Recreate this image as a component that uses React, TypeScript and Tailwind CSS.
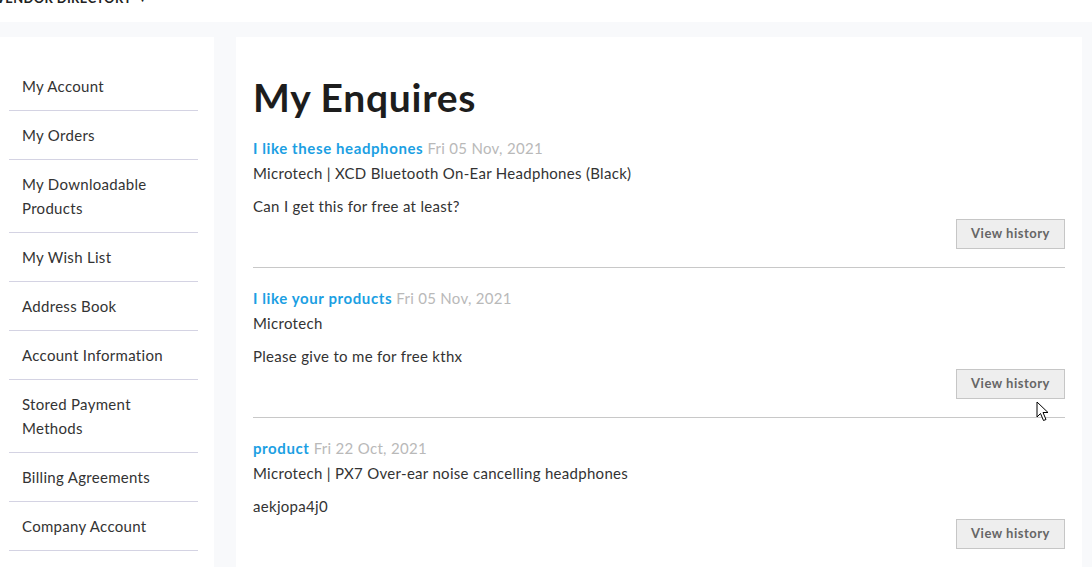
import React from 'react';

const navItems = [
  'My Account',
  'My Orders',
  'My Downloadable Products',
  'My Wish List',
  'Address Book',
  'Account Information',
  'Stored Payment Methods',
  'Billing Agreements',
  'Company Account',
];

const enquiries = [
  {
    title: 'I like these headphones',
    date: 'Fri 05 Nov, 2021',
    product: 'Microtech | XCD Bluetooth On-Ear Headphones (Black)',
    message: 'Can I get this for free at least?',
  },
  {
    title: 'I like your products',
    date: 'Fri 05 Nov, 2021',
    product: 'Microtech',
    message: 'Please give to me for free kthx',
  },
  {
    title: 'product',
    date: 'Fri 22 Oct, 2021',
    product: 'Microtech | PX7 Over-ear noise cancelling headphones',
    message: 'aekjopa4j0',
  },
];

export default function App() {
  return (
    <div
      className="relative h-[567px] overflow-hidden bg-[#f8f9fb] text-[#333] tracking-[0.3px]"
      style={{ fontFamily: 'Lato, "Open Sans", Arial, sans-serif' }}
    >
      {/* top bar */}
      <div className="h-[22px] bg-white overflow-hidden">
        <div className="-mt-[11px] flex items-center gap-2 text-[13px] font-bold tracking-wide text-[#222] uppercase">
          <span className="-ml-[4px]">Vendor Directory</span>
          <span className="text-[10px]">▾</span>
        </div>
      </div>

      <div className="flex gap-[22px] pt-[15px]">
        {/* sidebar */}
        <aside className="w-[214px] shrink-0 bg-white pt-[25px] pl-[9px] pr-[16px] h-[600px]">
          <ul>
            {navItems.map((item) => (
              <li
                key={item}
                className="border-b border-[#d4d3e3] py-[12px] pl-[13px] pr-4 text-[15px] leading-[24px] text-[#333]"
              >
                {item}
              </li>
            ))}
          </ul>
        </aside>

        {/* main */}
        <main className="w-[846px] shrink-0 bg-white pl-[17px] pr-[17px] pt-[35px] h-[600px]">
          <h1 className="text-[39px] font-bold leading-[50px] tracking-[0.7px] text-[#1d1d1d] mb-[14px]">My Enquires</h1>
          {enquiries.map((e, i) => (
            <div key={i} className={i > 0 ? 'border-t border-[#c8c8c8] pt-[18px]' : ''}>
              <div className="text-[15px] leading-[25px]">
                <span className="font-bold tracking-[0.6px] text-[#1c9fe3]">{e.title}</span>{' '}
                <span className="text-[#b9b9b9]">{e.date}</span>
              </div>
              <div className="text-[15px] leading-[25px] text-[#333]">{e.product}</div>
              <div className="mt-[8px] text-[15px] leading-[25px] text-[#333]">{e.message}</div>
              <div className="flex justify-end pb-[18px]">
                <button className="h-[30px] w-[109px] border border-[#c6c6c6] bg-[#eeeeee] text-[13px] font-bold tracking-[0.5px] text-[#666]">
                  View history
                </button>
              </div>
            </div>
          ))}
        </main>
      </div>

      {/* mouse cursor */}
      <svg className="absolute left-[1036px] top-[401px]" width="14" height="21" viewBox="0 0 14 21">
        <path
          d="M1 1 L1 16 L4.5 12.5 L7.5 19.5 L10 18.5 L7 11.5 L12 11.5 Z"
          fill="#fff"
          stroke="#000"
          strokeWidth="1"
          strokeLinejoin="miter"
        />
      </svg>
    </div>
  );
}
